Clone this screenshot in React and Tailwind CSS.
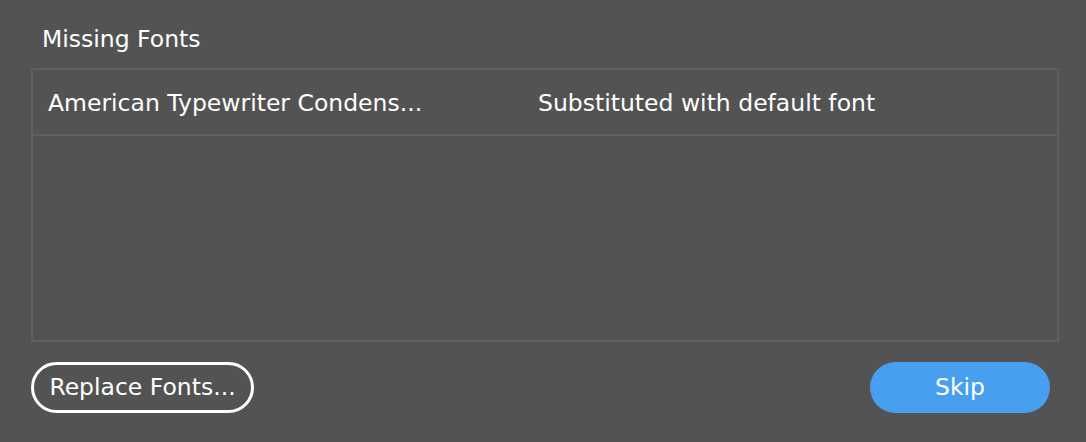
export default function App() {
  return (
    <div className="w-[1086px] h-[442px] bg-[#535353] text-white overflow-hidden" style={{ fontFamily: '"DejaVu Sans", "Open Sans", sans-serif' }}>
      <div className="pt-[25px] pl-[42px] text-[23.5px] leading-[28px]">Missing Fonts</div>
      <div className="mt-[15px] ml-[31px] w-[1028px] h-[274px] border-2 border-[#5f5f5f] flex flex-col">
        <div className="h-[66px] border-b-2 border-[#5f5f5f] flex items-center text-[23.5px] pt-[3px]">
          <span className="pl-[15px] w-[505px]">American Typewriter Condens...</span>
          <span>Substituted with default font</span>
        </div>
      </div>
      <div className="mt-[20px] ml-[31px] mr-[36px] flex justify-between items-center">
        <button className="h-[51px] w-[223px] rounded-full border-[3px] border-white text-[23.5px] flex items-center justify-center">
          Replace Fonts...
        </button>
        <button className="h-[51px] w-[180px] rounded-full bg-[#489ff0] text-[23.5px] flex items-center justify-center">
          Skip
        </button>
      </div>
    </div>
  );
}
